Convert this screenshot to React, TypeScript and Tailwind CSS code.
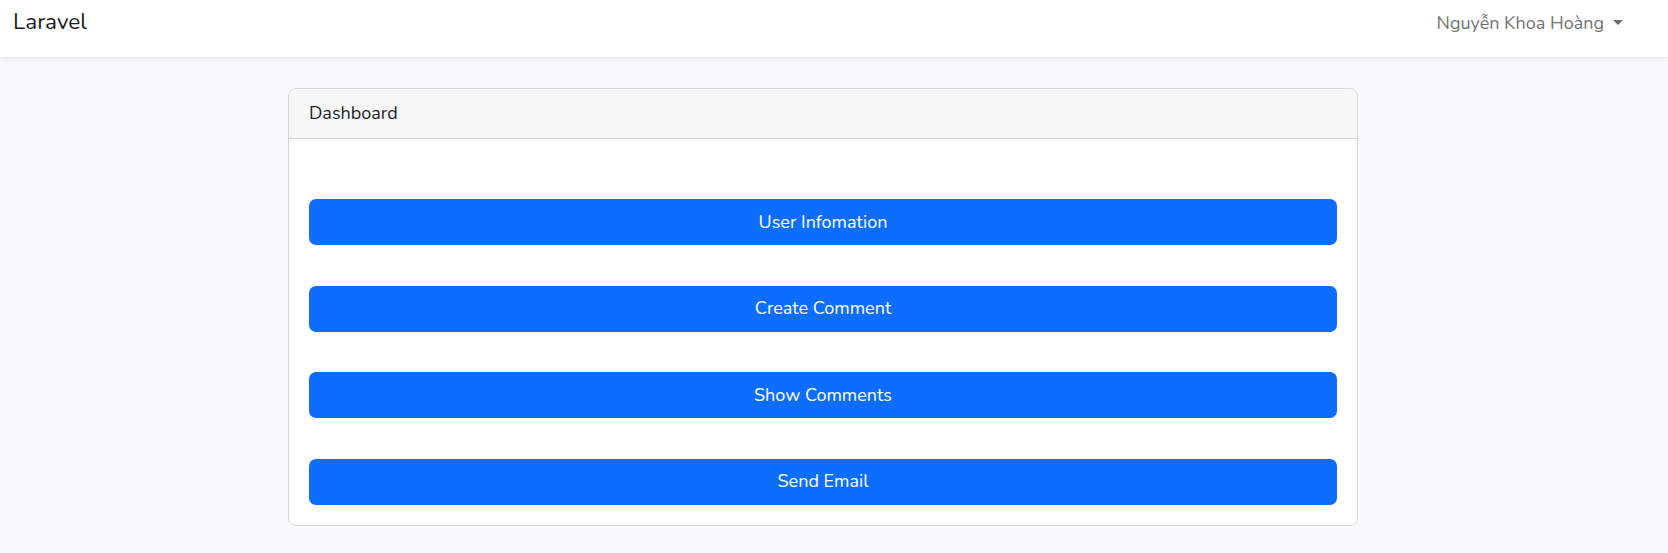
import { useState } from 'react';

const links = ['User Infomation', 'Create Comment', 'Show Comments', 'Send Email'];

export default function App() {
  const [open, setOpen] = useState(false);

  return (
    <div className="min-h-[553px] bg-[#f8fafc] font-['Nunito','Lato','Noto_Sans',sans-serif] text-[#212529]">
      <nav className="relative z-10 h-[57px] bg-white shadow-[0_2.5px_5px_rgba(0,0,0,0.075)]">
        <div className="flex h-[45px] items-center justify-between pl-[13px] pr-[45px]">
          <a href="#" className="text-[22.5px] leading-none text-[#1a1a1a]">
            Laravel
          </a>
          <button
            type="button"
            onClick={() => setOpen(!open)}
            className="flex items-center text-[18px] leading-none text-[#737373]"
          >
            Nguyễn Khoa Hoàng
            <span className="ml-[9px] h-0 w-0 border-x-[5.4px] border-t-[5.4px] border-x-transparent border-t-[#6b6b6b]" />
          </button>
        </div>
      </nav>

      <main className="pt-[31px] pb-[27px]">
        <div className="ml-[288px] w-[1070px] overflow-hidden rounded-[8px] border border-[#d6d6d6] bg-white">
          <div className="flex h-[50px] items-center border-b border-[#d6d6d6] bg-[#f7f7f7] px-[20px] text-[18px]">
            Dashboard
          </div>
          <div className="flex flex-col gap-[40.5px] px-[20px] pt-[60px] pb-[20px]">
            {links.map((label) => (
              <a
                key={label}
                href="#"
                className="flex h-[46px] items-center justify-center rounded-[7px] bg-[#0d6efd] text-[18px] text-white"
              >
                {label}
              </a>
            ))}
          </div>
        </div>
      </main>
    </div>
  );
}
